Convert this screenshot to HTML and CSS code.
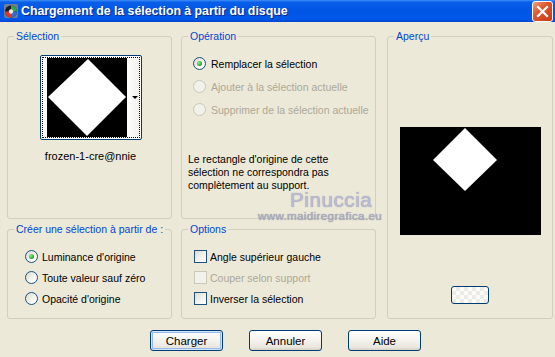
FILE: index.html
```html
<!DOCTYPE html>
<html lang="fr">
<head>
    <meta charset="UTF-8">
    <title>Chargement de la sélection à partir du disque</title>
    <link rel="stylesheet" href="styles.css">
</head>
<body>
    <div class="window">
        <!-- Title bar -->
        <div class="titlebar">
            <svg class="app-icon" width="16" height="16" viewBox="0 0 16 16">
                <rect x="1" y="1" width="14" height="14" rx="2" fill="#6f7f95"/>
                <circle cx="8" cy="8.5" r="6" fill="#1a1a22"/>
                <path d="M8 8.5 L8 2.5 A6 6 0 0 1 14 8.5 Z" fill="#2fa84a"/>
                <path d="M8 8.5 L14 8.5 A6 6 0 0 1 8 14.5 Z" fill="#2d6fd6"/>
                <path d="M8 8.5 L8 14.5 A6 6 0 0 1 2 8.5 Z" fill="#d63a2d"/>
                <circle cx="8" cy="8.5" r="2.2" fill="#e8e8e8"/>
            </svg>
            <span class="title">Chargement de la sélection à partir du disque</span>
            <div class="close">
                <svg width="21" height="21" viewBox="0 0 21 21">
                    <path d="M6 6 L15 15 M15 6 L6 15" stroke="#fff" stroke-width="2.2" stroke-linecap="square"/>
                </svg>
            </div>
        </div>

        <div class="dialog">
            <div class="groups">
                <!-- Sélection -->
                <fieldset class="group sel-group">
                    <legend>Sélection</legend>
                    <div class="thumb-btn">
                        <div class="thumb-focus">
                            <svg class="thumb-img" width="80" height="79" viewBox="0 0 80 79">
                                <rect width="80" height="79" fill="#000"/>
                                <polygon points="41,1 79,39 40,78 1,39" fill="#fff"/>
                            </svg>
                            <div class="thumb-side">
                                <span class="thumb-arrow"></span>
                            </div>
                        </div>
                    </div>
                    <div class="thumb-name">frozen-1-cre@nnie</div>
                </fieldset>

                <!-- Opération -->
                <fieldset class="group op-group">
                    <legend>Opération</legend>
                    <div class="op-list">
                        <div class="opt"><span class="radio checked"></span>Remplacer la sélection</div>
                        <div class="opt disabled"><span class="radio"></span>Ajouter à la sélection actuelle</div>
                        <div class="opt disabled"><span class="radio"></span>Supprimer de la sélection actuelle</div>
                    </div>
                    <p class="note">Le rectangle d'origine de cette<br>sélection ne correspondra pas<br>complètement au support.</p>
                </fieldset>

                <!-- Aperçu -->
                <fieldset class="group preview-group">
                    <legend>Aperçu</legend>
                    <svg class="preview" width="141" height="108" viewBox="0 0 141 108">
                        <rect width="141" height="108" fill="#000"/>
                        <polygon points="65,1 97,33 65,64 33,33" fill="#fff"/>
                    </svg>
                    <div class="small-btn"></div>
                </fieldset>

                <!-- Créer une sélection -->
                <fieldset class="group src-group">
                    <legend>Créer une sélection à partir de :</legend>
                    <div class="row-list">
                        <div class="opt"><span class="radio checked"></span>Luminance d'origine</div>
                        <div class="opt"><span class="radio"></span>Toute valeur sauf zéro</div>
                        <div class="opt"><span class="radio"></span>Opacité d'origine</div>
                    </div>
                </fieldset>

                <!-- Options -->
                <fieldset class="group opts-group">
                    <legend>Options</legend>
                    <div class="row-list">
                        <div class="opt check-opt"><span class="check"></span>Angle supérieur gauche</div>
                        <div class="opt check-opt disabled"><span class="check"></span>Couper selon support</div>
                        <div class="opt check-opt"><span class="check"></span>Inverser la sélection</div>
                    </div>
                </fieldset>
            </div>

            <div class="buttons">
                <button class="btn default">Charger</button>
                <button class="btn">Annuler</button>
                <button class="btn">Aide</button>
            </div>
        </div>

        <!-- watermark over the dialog -->
        <div class="wm-name">Pinuccia</div>
        <div class="wm-url">www.maidiregrafica.eu</div>
    </div>
</body>
</html>
```

FILE: styles.css
```css
body {
    margin: 0;
    background: #ECE9D8;
    font-family: "Liberation Sans", Arial, sans-serif;
    font-size: 10.5px;
    color: #000;
}
.window {
    position: relative;
    width: 555px;
    height: 357px;
    overflow: hidden;
}

/* title bar */
.titlebar {
    height: 22px;
    display: flex;
    align-items: center;
    padding: 0 2px 0 3px;
    background: linear-gradient(to bottom, #3d8df5 0%, #0a5fe9 10%, #0055e4 45%, #0058ea 85%, #0045cf 100%);
}
.app-icon {
    margin-right: 2px;
    flex: none;
}
.title {
    flex: 1;
    color: #fff;
    font-weight: bold;
    font-size: 12.3px;
    text-shadow: 1px 1px 0 #0a2a8a;
}
.close {
    width: 19px;
    height: 19px;
    border: 1px solid #fff;
    border-radius: 3px;
    background: linear-gradient(135deg, #f0a080 0%, #e0572f 40%, #c9391a 100%);
    overflow: hidden;
}
.close svg {
    display: block;
    margin: -1px;
}

/* dialog body */
.dialog {
    padding: 8px 2px 0 7px;
}
.groups {
    display: grid;
    grid-template-columns: 165px 195px 1fr;
    grid-template-rows: 189px 96px;
    column-gap: 9px;
    row-gap: 4px;
}
.group {
    margin: 0;
    padding: 0;
    min-width: 0;
    border: 1px solid #D0D0BF;
    border-radius: 3px;
}
.group legend {
    color: #0046D5;
    padding: 0 2px;
    margin-left: 6px;
    line-height: 13px;
    white-space: nowrap;
}
.preview-group {
    grid-column: 3;
    grid-row: 1 / span 2;
    margin-left: 2px;
}
.src-group {
    grid-column: 1;
    grid-row: 2;
}
.opts-group {
    grid-column: 2;
    grid-row: 2;
}

/* thumbnail picker */
.thumb-btn {
    width: 102px;
    height: 85px;
    box-sizing: border-box;
    margin: 12px 0 0 32px;
    border: 1px solid #003C74;
    border-radius: 2px;
    padding: 1px;
    background: #fff;
}
.thumb-focus {
    height: 100%;
    box-sizing: border-box;
    border: 1px dotted #000;
    display: flex;
    padding-left: 4px;
}
.thumb-img {
    display: block;
    flex: none;
}
.thumb-side {
    flex: 1;
    background: linear-gradient(to right, #fff, #f1f0ea);
    display: flex;
    align-items: center;
    justify-content: flex-end;
    padding-right: 1px;
}
.thumb-arrow {
    width: 0;
    height: 0;
    border-left: 3px solid transparent;
    border-right: 3px solid transparent;
    border-top: 3px solid #000;
}
.thumb-name {
    text-align: center;
    line-height: 13px;
    margin: 10px 0 0 2px;
    font-size: 11px;
}

/* radios and checkboxes */
.op-list {
    padding: 9px 0 0 11px;
}
.op-list .opt {
    height: 23px;
    gap: 5px;
}
.opt {
    display: flex;
    align-items: center;
    gap: 4px;
    white-space: nowrap;
}
.opt.disabled {
    color: #ACA899;
}
.radio {
    width: 13px;
    height: 13px;
    box-sizing: border-box;
    border: 1px solid #1C5180;
    border-radius: 50%;
    background: linear-gradient(135deg, #dcd9cc 0%, #f6f5f0 60%, #fff 100%);
    display: flex;
    align-items: center;
    justify-content: center;
    flex: none;
}
.radio.checked::after {
    content: "";
    width: 5px;
    height: 5px;
    border-radius: 50%;
    background: radial-gradient(circle at 35% 35%, #8ef08e, #21a121 70%);
}
.disabled .radio,
.disabled .check {
    border-color: #CAC8BB;
    background: #F2F1EA;
}
.row-list {
    padding: 10px 0 0 17px;
}
.row-list .opt {
    height: 21px;
}
.opts-group .row-list {
    padding-left: 12px;
}
.check-opt {
    gap: 3px;
}
.check {
    width: 13px;
    height: 13px;
    box-sizing: border-box;
    border: 1px solid #1C5180;
    background: linear-gradient(135deg, #dcdbd2 0%, #f4f3ee 55%, #fff 100%);
    flex: none;
}
.note {
    margin: 32px 0 0 6px;
    line-height: 13px;
    white-space: nowrap;
}

/* preview */
.preview {
    display: block;
    margin: 84px auto 0;
}
.small-btn {
    width: 38px;
    height: 18px;
    box-sizing: border-box;
    margin: 51px auto 0;
    border: 1px solid #003C74;
    border-radius: 3px;
    background:
        linear-gradient(45deg, #ecebe6 25%, transparent 25%, transparent 75%, #ecebe6 75%),
        linear-gradient(45deg, #ecebe6 25%, #fbfbf9 25%, #fbfbf9 75%, #ecebe6 75%);
    background-size: 8px 8px;
    background-position: 0 0, 4px 4px;
}

/* bottom buttons */
.buttons {
    display: flex;
    gap: 26px;
    padding-left: 143px;
    margin-top: 11px;
}
.btn {
    width: 73px;
    height: 21px;
    padding: 0;
    font-family: inherit;
    font-size: 11.5px;
    color: #000;
    border: 1px solid #003C74;
    border-radius: 3px;
    background: linear-gradient(to bottom, #ffffff 0%, #f5f4ef 45%, #e9e7df 85%, #d6d0c5 100%);
}
.btn.default {
    box-shadow: inset 0 0 0 1px #cee7ff, inset 0 0 0 2px #98b8ea;
}

/* watermark */
.wm-name {
    position: absolute;
    left: 290px;
    top: 188px;
    font-size: 20.5px;
    color: #bcbcd2;
    text-shadow: 0 0 1px #8686aa;
    letter-spacing: 0.6px;
}
.wm-url {
    position: absolute;
    left: 258px;
    top: 210px;
    font-size: 11.5px;
    letter-spacing: 0.4px;
    color: #b0b0c2;
    text-shadow: 0 0 1px #7a7a96;
}
```
